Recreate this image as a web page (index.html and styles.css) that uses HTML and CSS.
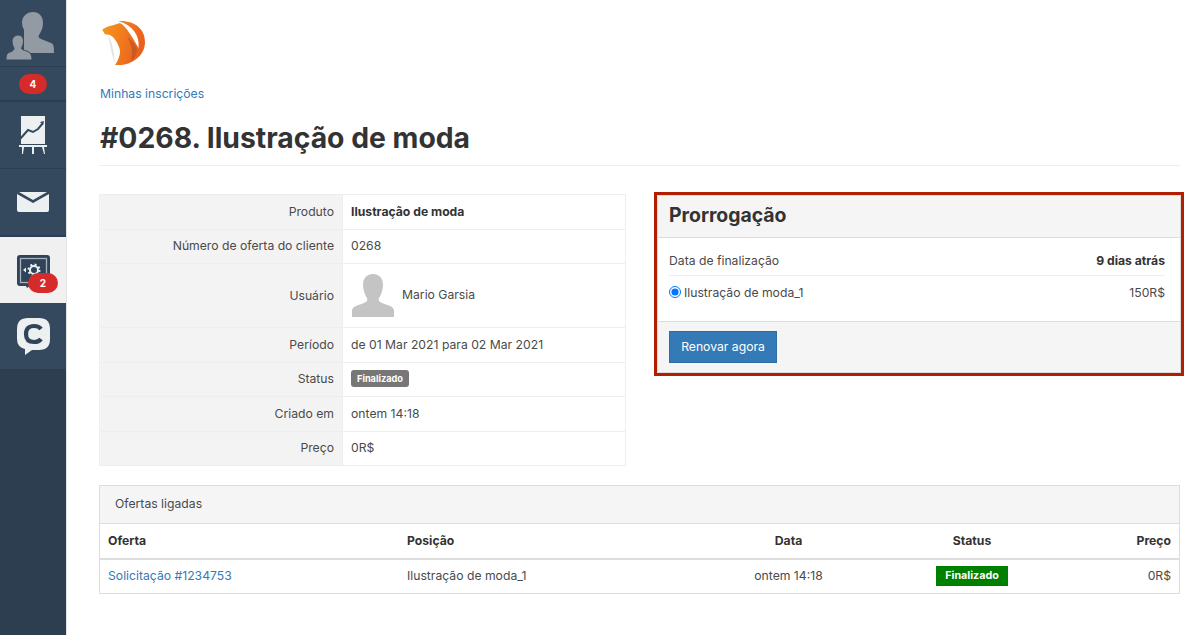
FILE: index.html
```html
<!DOCTYPE html>
<html lang="pt">
<head>
<meta charset="utf-8">
<title>Minhas inscrições</title>
<link rel="stylesheet" href="styles.css">
</head>
<body>
<div class="app">
  <nav class="sidebar">
    <a class="nav-item">
      <svg class="avatar" width="66" height="66" viewBox="0 0 66 66"><path fill="#929aa3" d="M33 12c6 0 10 4 10 11 0 5-2 9-4 12-1 2 0 3 2 4l10 4c3 1 3 5 3 10H24V30c0-1-2-3-2-7 0-7 5-11 11-11z"/><path fill="#929aa3" stroke="#34495e" stroke-width="1" d="M18 35c3.500 0 5.500 3 5.500 6 0 3-1 5-2 7 0 1.500 2 2 5 3 4 1 5.500 4 5.500 9H6c0-5 1-7 4-8 3-1 4-2 4-4-1-2-2-4-2-7 0-3 3-6 6-6z"/></svg>
    </a>
    <div class="badge-strip"><span class="count small">4</span></div>
    <a class="nav-item">
      <svg class="ico" width="28" height="38" viewBox="0 0 28 38"><path fill="#ecf0f1" d="M2 0h24v28H2z"/><path fill="none" stroke="#34495e" stroke-width="2" d="M1 23l8-9 5 2 5-3 5-6"/><path fill="#34495e" d="M25 5l-4 1 3 3z"/><path fill="#ecf0f1" d="M0 29h28v2H0zM3 31h2l-1 7H3zM13 31h2v7h-2zM23 31h2l1 7h-1z"/></svg>
    </a>
    <a class="nav-item">
      <svg class="ico" width="32" height="20" viewBox="0 0 32 20"><path fill="#ecf0f1" d="M0 2l16 9L32 2v16q0 2-2 2H2q-2 0-2-2z"/><path fill="#ecf0f1" d="M2 0h28L16 8z"/></svg>
    </a>
    <a class="nav-item active">
      <svg class="ico shift" width="33" height="33" viewBox="0 0 33 33"><path fill="#2f4359" d="M3 0h27q3 0 3 3v25q0 3-3 3H13l-3 2-1-2H3q-3 0-3-3V3q0-3 3-3z"/><rect x="3.500" y="3.500" width="26" height="24" fill="none" stroke="#a9b2bb" stroke-width="1.300"/><circle cx="17" cy="15" r="4" fill="none" stroke="#ecf0f1" stroke-width="2"/><circle cx="17" cy="15" r="5.500" fill="none" stroke="#ecf0f1" stroke-width="2" stroke-dasharray="2 2.300"/><path fill="#ecf0f1" d="M6 15l3-2.500v5z"/></svg>
      <span class="count over">2</span>
    </a>
    <a class="nav-item">
      <svg class="ico" width="33" height="37" viewBox="0 0 33 37"><path fill="#ecf0f1" d="M11 0h11q11 0 11 11v10q0 11-11 11H15l-7 5 0-6Q0 29 0 21V11Q0 0 11 0z"/><path fill="none" stroke="#2f4359" stroke-width="4.200" d="M24 11q-2-3-7-3-8 0-8 8t8 8q5 0 7-3"/></svg>
    </a>
  </nav>

  <main class="content">
    <svg class="logo" width="46" height="46" viewBox="0 0 46 46">
      <defs><linearGradient id="lg" x1="0" y1="0" x2="1" y2="0.300"><stop offset="0" stop-color="#f9981c"/><stop offset="1" stop-color="#e9601f"/></linearGradient></defs>
      <path fill="url(#lg)" d="M2.300 10L3 9C6 7 9 6 12 5.500L20 3C26 6 33 18 38.500 28C40 16 33 5 18 1C35 0 45 9 45 22C45 34 35 43 22 45H15C20 38 21 31 19 27C17 22 14 17 10 15L5 14.300Z"/>
      <path fill="#e4e4e4" d="M8 15C12 20 14 32 15 44C12 36 10 24 8 15Z"/>
      <path fill="#a9502c" opacity=".55" d="M27 17C33 20 37 27 37 31C36 36 33 40 31 41C33 33 32 24 27 17Z"/>
    </svg>
    <a class="crumb">Minhas inscrições</a>
    <h1 class="title">#0268. Ilustração de moda</h1>

    <div class="columns">
      <table class="details">
        <tr><th>Produto</th><td><strong>Ilustração de moda</strong></td></tr>
        <tr><th>Número de oferta do cliente</th><td>0268</td></tr>
        <tr class="user-row"><th>Usuário</th><td>
          <div class="user">
            <svg width="44" height="44" viewBox="0 0 44 44"><path fill="#c4c4c4" d="M22 1c7 0 10 5 10 11 0 5-2 10-4 13-1 3 1 4 3 5 5 2 11 3 12 7v7H1v-7c1-4 7-5 12-7 2-1 4-2 3-5-2-3-4-8-4-13C12 6 15 1 22 1z"/></svg>
            <span>Mario Garsia</span>
          </div>
        </td></tr>
        <tr><th>Período</th><td>de 01 Mar 2021 para 02 Mar 2021</td></tr>
        <tr><th>Status</th><td><span class="tag gray">Finalizado</span></td></tr>
        <tr><th>Criado em</th><td>ontem 14:18</td></tr>
        <tr><th>Preço</th><td>0R$</td></tr>
      </table>

      <section class="renew">
        <h2 class="renew-head">Prorrogação</h2>
        <div class="renew-body">
          <div class="line first"><span>Data de finalização</span><strong>9 dias atrás</strong></div>
          <div class="line"><label class="opt"><input type="radio" name="o" checked>Ilustração de moda_1</label><span>150R$</span></div>
        </div>
        <div class="renew-foot"><button class="btn" type="button">Renovar agora</button></div>
      </section>
    </div>

    <section class="linked">
      <div class="linked-head">Ofertas ligadas</div>
      <table class="offers">
        <tr><th class="c1">Oferta</th><th class="c2">Posição</th><th class="c3">Data</th><th class="c4">Status</th><th class="c5">Preço</th></tr>
        <tr><td class="c1"><a>Solicitação #1234753</a></td><td class="c2">Ilustração de moda_1</td><td class="c3">ontem 14:18</td><td class="c4"><span class="tag green">Finalizado</span></td><td class="c5">0R$</td></tr>
      </table>
    </section>
  </main>
</div>
</body>
</html>
```
FILE: styles.css
```css
* { box-sizing: border-box; }
html, body { margin: 0; height: 100%; }
body { font-family: "Inter", "Liberation Sans", sans-serif; font-size: 12.200px; color: #4a4a4a; background: #fff; overflow: hidden; }
.app { display: flex; height: 635px; }
.sidebar { width: 67px; flex: none; background: #2c3e50; border-right: 1px solid #dfe3e6; display: flex; flex-direction: column; }
.nav-item { height: 67px; flex: none; background: #34495e; border-bottom: 1px solid #2c3e50; display: flex; align-items: center; justify-content: center; position: relative; }
.nav-item.active { background: #f0f0f0; border-top: 1px solid #2c3e50; border-bottom: 0; }
.ico.shift { margin-top: 2px; }
.badge-strip { height: 35px; background: #34495e; border-bottom: 2px solid #2c3e50; display: flex; align-items: center; justify-content: center; }
.count { background: #d52b2b; color: #fff; font-weight: 700; font-size: 10px; border-radius: 10px; display: flex; align-items: center; justify-content: center; }
.count.small { width: 28px; height: 20px; }
.count.over { position: absolute; left: 28px; top: 36px; width: 30px; height: 20px; }
.content { flex: 1; padding: 20px 20px 0 32px; min-width: 0; }
.logo { display: block; margin-left: 1px; }
.crumb { display: block; margin-top: 20px; padding-left: 1px; color: #337ab7; line-height: 16px; }
.title { margin: 19px 0 0; height: 45px; padding-left: 1px; font-size: 28.300px; line-height: 34px; font-weight: 700; color: #333; border-bottom: 1px solid #eee; }
.columns { display: flex; justify-content: space-between; align-items: flex-start; margin-top: 28px; }
.details { width: 527px; border-collapse: collapse; border: 1px solid #ddd; }
.details th, .details td { border: 1px solid #eee; height: 34.500px; padding: 0 8px 1px; font-weight: 400; }
.details th { width: 243px; background: #f3f3f3; text-align: right; }
.details .user-row th, .details .user-row td { height: 64px; }
.details strong { color: #333; }
.user { display: flex; align-items: center; gap: 7px; }
.user span { line-height: 44px; }
.tag { display: inline-block; color: #fff; font-weight: 700; }
.tag.gray { background: #777; padding: 2px 6px; border-radius: 3px; font-size: 9.200px; line-height: 13px; }
.tag.green { background: #008000; padding: 2px 9px; font-size: 10.700px; line-height: 16px; }
.renew { width: 524px; margin: 1px -1px 0 0; background: #fff; outline: 3px solid #b02000; border: 1px solid #ddd; }
.renew-head { margin: 0; height: 42px; padding: 0 11px; background: #f5f5f5; border-bottom: 1px solid #ddd; font-size: 19.400px; line-height: 38px; font-weight: 700; color: #333; }
.renew-body { padding: 7px 15px 11px 11px; height: 83px; }
.line { display: flex; justify-content: space-between; align-items: center; height: 31px; }
.line + .line { height: 32px; }
.line.first { border-bottom: 1px solid #eee; }
.line strong { color: #333; }
.opt { display: flex; align-items: center; }
.opt input { margin: 0 3px 0 0; width: 12px; height: 12px; }
.renew-foot { height: 51px; background: #f5f5f5; border-top: 1px solid #ddd; padding: 9px 11px; }
.btn { display: block; width: 108px; height: 32px; border: 1px solid #2e6da4; background: #337ab7; color: #fff; font: inherit; padding: 0 0 2px; }
.linked { margin-top: 19px; border: 1px solid #ddd; }
.linked-head { height: 38px; padding: 0 15px; background: #f5f5f5; border-bottom: 1px solid #ddd; line-height: 35px; }
.offers { width: 100%; border-collapse: collapse; table-layout: fixed; }
.offers th { height: 35px; padding: 0 8px 2px; border-bottom: 2px solid #ddd; text-align: left; color: #333; font-weight: 700; }
.offers td { height: 34px; padding: 0 8px 2px; }
.offers a { color: #337ab7; }
.offers .c1 { width: 299px; }
.offers .c2 { width: 300px; }
.offers .c3 { width: 179px; text-align: center; }
.offers .c4 { width: 188px; text-align: center; }
.offers .c5 { text-align: right; }
```
